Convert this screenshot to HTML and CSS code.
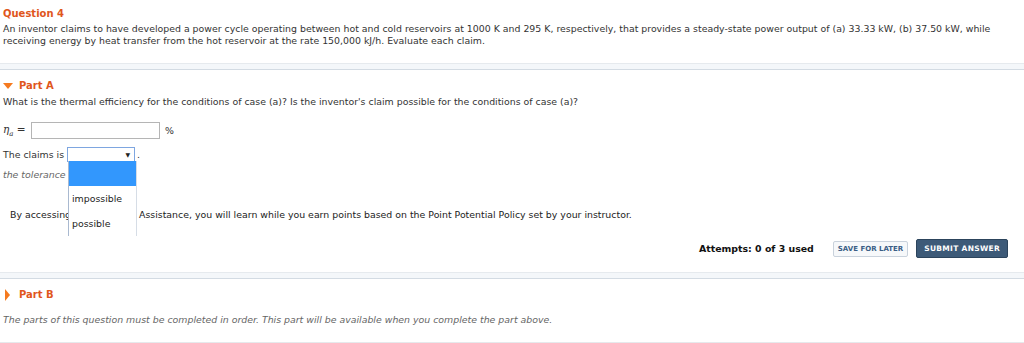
FILE: index.html
```html
<!DOCTYPE html>
<html lang="en">
<head>
    <meta charset="UTF-8">
    <title>Question 4</title>
    <link rel="stylesheet" href="styles.css">
</head>
<body>
<div class="question">
    <h2 class="q_title">Question 4</h2>
    <p class="q_text">An inventor claims to have developed a power cycle operating between hot and cold reservoirs at 1000 K and 295 K, respectively, that provides a steady-state power output of (a) 33.33 kW, (b) 37.50 kW, while receiving energy by heat transfer from the hot reservoir at the rate 150,000 kJ/h. Evaluate each claim.</p>
</div>

<div class="divider"></div>

<div class="part part_a">
    <h3 class="part_title"><span class="tri_down"></span>Part A</h3>
    <p class="part_text">What is the thermal efficiency for the conditions of case (a)? Is the inventor's claim possible for the conditions of case (a)?</p>

    <div class="answer_row">
        <span class="eta"><i>&eta;</i><sub><i>a</i></sub> =</span>
        <span class="input_box"></span>
        <span class="unit">%</span>
    </div>

    <div class="claim_row">
        <span>The claims is</span>
        <span class="select_wrap">
            <span class="select_box"><span class="arrow">&#9660;</span></span>
            <span class="menu">
                <span class="opt opt_sel"></span>
                <span class="opt">impossible</span>
                <span class="opt">possible</span>
            </span>
        </span>
        <span>.</span>
    </div>

    <p class="tolerance">the tolerance is +/-2%</p>

    <p class="assist">By accessing this Question Assistance, you will learn while you earn points based on the Point Potential Policy set by your instructor.</p>

    <div class="actions">
        <span class="attempts">Attempts: 0 of 3 used</span>
        <span class="btn_save">SAVE FOR LATER</span>
        <span class="btn_submit">SUBMIT ANSWER</span>
    </div>
</div>

<div class="divider"></div>

<div class="part part_b">
    <h3 class="part_title"><span class="tri_right"></span>Part B</h3>
    <p class="locked">The parts of this question must be completed in order. This part will be available when you complete the part above.</p>
</div>
</body>
</html>
```

FILE: styles.css
```css
body {
    margin: 0;
    background: #fff;
    font-family: "DejaVu Sans", Verdana, sans-serif;
    font-size: 9.4px;
    color: #333;
}

p, h2, h3 {
    margin: 0;
}

.question {
    padding: 8px 3px 0;
    height: 55px;
}

.q_title {
    font-size: 10px;
    font-weight: bold;
    color: #e0561c;
    line-height: 12px;
    margin-bottom: 3px;
}

.q_text {
    line-height: 12px;
    padding-right: 20px;
}

.divider {
    height: 5px;
    border-top: 1px solid #e6eaee;
    border-bottom: 1px solid #d3dbe3;
    background: #f4f7fa;
}

.part {
    padding: 0 3px;
}

.part_a {
    height: 202px;
}

.part_b {
    height: 63px;
    border-bottom: 1px solid #e6e9ec;
}

.part_title {
    font-size: 10px;
    font-weight: bold;
    color: #e0561c;
    line-height: 12px;
    padding-top: 10px;
    display: flex;
    align-items: center;
}

.tri_down {
    width: 0;
    height: 0;
    border-left: 5px solid transparent;
    border-right: 5px solid transparent;
    border-top: 6px solid #f57a1f;
    margin-right: 6px;
}

.tri_right {
    width: 0;
    height: 0;
    border-top: 6px solid transparent;
    border-bottom: 6px solid transparent;
    border-left: 5px solid #f57a1f;
    margin: 0 9px 0 2px;
}

.part_text {
    margin-top: 4px;
    line-height: 12px;
}

.answer_row {
    display: flex;
    align-items: center;
    margin-top: 14px;
    height: 17px;
}

.eta {
    font-family: "DejaVu Serif", serif;
    font-size: 10.5px;
    color: #333;
    width: 28px;
}

.eta sub {
    font-size: 7px;
}

.input_box {
    width: 127px;
    height: 15px;
    border: 1px solid #b5b5b5;
    background: #fff;
}

.unit {
    margin-left: 5px;
}

.claim_row {
    display: flex;
    align-items: center;
    margin-top: 7px;
    height: 16px;
}

.select_wrap {
    position: relative;
    margin-left: 3px;
    margin-right: 2px;
}

.select_box {
    display: flex;
    justify-content: flex-end;
    align-items: center;
    width: 66px;
    height: 13px;
    border: 1px solid #7ea6e0;
    background: #fff;
}

.arrow {
    font-size: 6px;
    margin-right: 4px;
    color: #222;
}

.menu {
    position: absolute;
    left: 1px;
    top: 14px;
    width: 67px;
    display: flex;
    flex-direction: column;
    background: #fff;
    border-left: 1px solid #a9b9d0;
    border-right: 1px solid #d6dde6;
}

.opt {
    height: 25px;
    line-height: 25px;
    padding-left: 3px;
    color: #222;
}

.opt_sel {
    background: #3297fd;
}

.tolerance {
    margin-top: 7px;
    font-style: italic;
    color: #666;
    line-height: 12px;
}

.assist {
    margin-top: 28px;
    padding-left: 7px;
    line-height: 12px;
    color: #222;
}

.actions {
    display: flex;
    justify-content: flex-end;
    align-items: center;
    margin-top: 18px;
    padding-right: 13px;
}

.attempts {
    font-weight: bold;
    font-size: 9.4px;
    color: #111;
    margin-right: 19px;
}

.btn_save {
    font-size: 7px;
    font-weight: bold;
    color: #3b5e86;
    border: 1px solid #c9d2dc;
    border-radius: 2px;
    background: #f6f8fa;
    padding: 3px 4px;
    margin-right: 8px;
}

.btn_submit {
    font-size: 7.5px;
    font-weight: bold;
    letter-spacing: 0.3px;
    color: #fff;
    background: #3d5a78;
    border: 1px solid #2c445c;
    border-radius: 2px;
    padding: 4px 7px;
}

.locked {
    margin-top: 13px;
    font-style: italic;
    color: #666;
    line-height: 12px;
}
```
